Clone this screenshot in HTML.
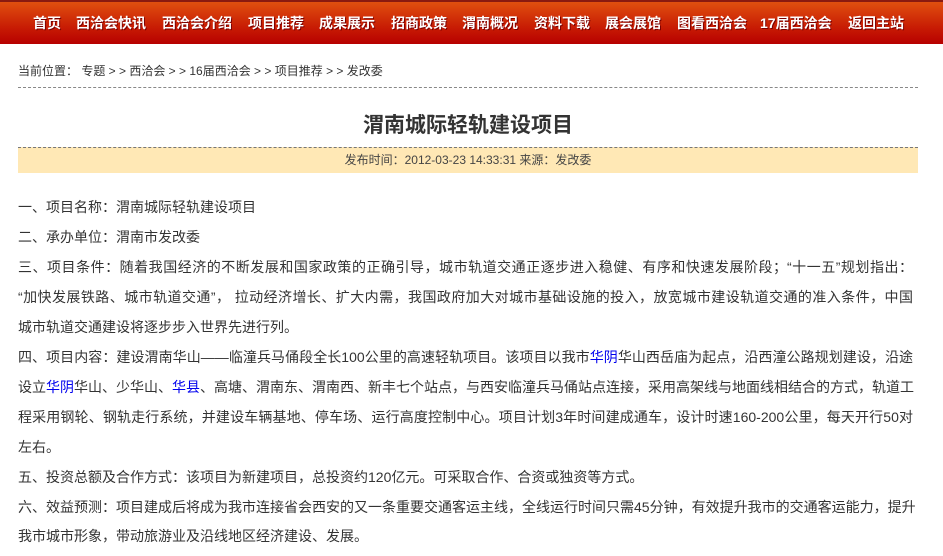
<!DOCTYPE html>
<html><head><meta charset="utf-8"><style>
*{margin:0;padding:0}
body{width:943px;height:556px;overflow:hidden;background:#fff;font-family:"Liberation Sans","Noto Sans CJK SC",sans-serif;color:#333;position:relative}
.nav{position:absolute;left:0;top:0;width:943px;height:44px;background:linear-gradient(#e0500f,#c81c04 60%,#b70000);border-top:2px solid #8a1a10;box-sizing:border-box}
.nav span{position:absolute;top:12px;font-size:14px;font-weight:bold;color:#fff;white-space:nowrap;text-shadow:1px 1px 0 #7a0000;line-height:18px}
.crumb{position:absolute;left:18px;top:62px;font-size:12px;color:#333;line-height:18px;white-space:nowrap}
.dash1{position:absolute;left:18px;top:87px;width:900px;border-top:1px dashed #888}
.title{position:absolute;left:18px;width:900px;top:112px;text-align:center;font-size:21px;font-weight:bold;color:#333;line-height:28px}
.date{position:absolute;left:18px;top:147px;width:900px;height:25px;background:#ffe8b5;border-top:1px dashed #777;text-align:center;font-size:12px;line-height:24px;color:#444}
.body{position:absolute;left:18px;top:193px;font-size:14px;line-height:29.95px;color:#333}
.body div{white-space:nowrap}
.j{width:895px;text-align:justify;text-align-last:justify}
a{color:#0000ee;text-decoration:none}
</style></head><body>
<div class="nav">
<span style="left:33px">首页</span>
<span style="left:76px">西洽会快讯</span>
<span style="left:162px">西洽会介绍</span>
<span style="left:248px">项目推荐</span>
<span style="left:319px">成果展示</span>
<span style="left:391px">招商政策</span>
<span style="left:462px">渭南概况</span>
<span style="left:534px">资料下载</span>
<span style="left:605px">展会展馆</span>
<span style="left:677px">图看西洽会</span>
<span style="left:760px">17届西洽会</span>
<span style="left:848px">返回主站</span>
</div>
<div class="crumb">当前位置： 专题 &gt; &gt; 西洽会 &gt; &gt; 16届西洽会 &gt; &gt; 项目推荐 &gt; &gt; 发改委</div>
<div class="dash1"></div>
<div class="title">渭南城际轻轨建设项目</div>
<div class="date">发布时间：2012-03-23 14:33:31 来源：发改委</div>
<div class="body">
<div>一、项目名称：渭南城际轻轨建设项目</div>
<div>二、承办单位：渭南市发改委</div>
<div class="j">三、项目条件：随着我国经济的不断发展和国家政策的正确引导，城市轨道交通正逐步进入稳健、有序和快速发展阶段；“十一五”规划指出：</div>
<div class="j">“加快发展铁路、城市轨道交通”， 拉动经济增长、扩大内需，我国政府加大对城市基础设施的投入，放宽城市建设轨道交通的准入条件，中国</div>
<div>城市轨道交通建设将逐步步入世界先进行列。</div>
<div class="j">四、项目内容：建设渭南华山——临潼兵马俑段全长100公里的高速轻轨项目。该项目以我市<a>华阴</a>华山西岳庙为起点，沿西潼公路规划建设，沿途</div>
<div class="j">设立<a>华阴</a>华山、少华山、<a>华县</a>、高塘、渭南东、渭南西、新丰七个站点，与西安临潼兵马俑站点连接，采用高架线与地面线相结合的方式，轨道工</div>
<div class="j">程采用钢轮、钢轨走行系统，并建设车辆基地、停车场、运行高度控制中心。项目计划3年时间建成通车，设计时速160-200公里，每天开行50对</div>
<div>左右。</div>
<div>五、投资总额及合作方式：该项目为新建项目，总投资约120亿元。可采取合作、合资或独资等方式。</div>
<div class="j">六、效益预测：项目建成后将成为我市连接省会西安的又一条重要交通客运主线，全线运行时间只需45分钟，有效提升我市的交通客运能力，提升</div>
<div>我市城市形象，带动旅游业及沿线地区经济建设、发展。</div>
</div>
</body></html>
